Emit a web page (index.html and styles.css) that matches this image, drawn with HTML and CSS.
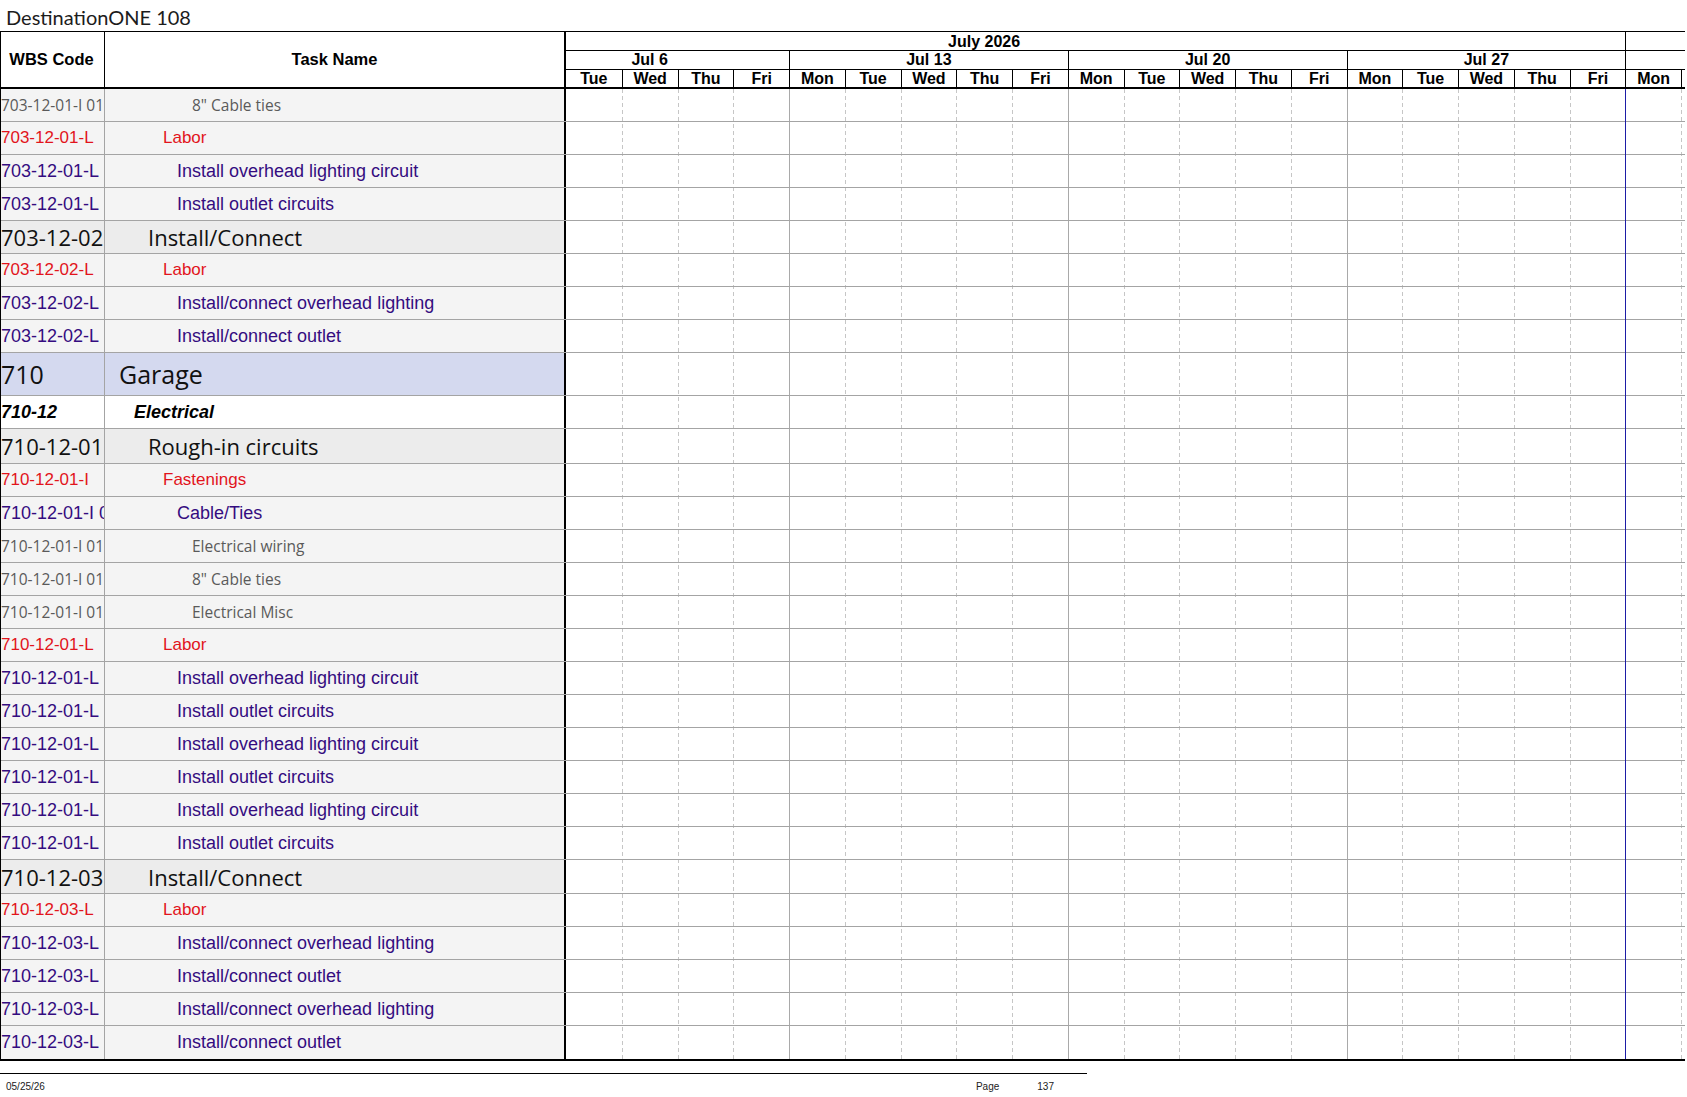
FILE: index.html
```html
<!DOCTYPE html>
<html lang="en">
<head>
<meta charset="utf-8">
<title>DestinationONE 108</title>
<link rel="stylesheet" href="styles.css">
</head>
<body>
<div class="title">DestinationONE 108</div>
<div class="sheet">
  <div class="head">
    <div class="h-wbs">WBS Code</div>
    <div class="h-task">Task Name</div>
    <div class="h-time">
      <div class="m jul">July 2026</div>
      <div class="m aug"></div>
      <div class="w w1">Jul 6</div>
      <div class="w w2">Jul 13</div>
      <div class="w w3">Jul 20</div>
      <div class="w w4">Jul 27</div>
      <div class="w aug"></div>
      <div class="d d0">Tue</div>
      <div class="d">Wed</div>
      <div class="d">Thu</div>
      <div class="d">Fri</div>
      <div class="d">Mon</div>
      <div class="d">Tue</div>
      <div class="d">Wed</div>
      <div class="d">Thu</div>
      <div class="d">Fri</div>
      <div class="d">Mon</div>
      <div class="d">Tue</div>
      <div class="d">Wed</div>
      <div class="d">Thu</div>
      <div class="d">Fri</div>
      <div class="d">Mon</div>
      <div class="d">Tue</div>
      <div class="d">Wed</div>
      <div class="d">Thu</div>
      <div class="d">Fri</div>
      <div class="d">Mon</div>
      <div class="d stub"></div>
    </div>
  </div>
  <div class="rows">
    <div class="status"></div>
    <div class="row lv4"><div class="wbs">703-12-01-I 01</div><div class="task">8" Cable ties</div><div class="gantt"></div></div>
    <div class="row lv2"><div class="wbs">703-12-01-L</div><div class="task">Labor</div><div class="gantt"></div></div>
    <div class="row lv3"><div class="wbs">703-12-01-L</div><div class="task">Install overhead lighting circuit</div><div class="gantt"></div></div>
    <div class="row lv3"><div class="wbs">703-12-01-L</div><div class="task">Install outlet circuits</div><div class="gantt"></div></div>
    <div class="row big"><div class="wbs">703-12-02</div><div class="task">Install/Connect</div><div class="gantt"></div></div>
    <div class="row lv2"><div class="wbs">703-12-02-L</div><div class="task">Labor</div><div class="gantt"></div></div>
    <div class="row lv3"><div class="wbs">703-12-02-L</div><div class="task">Install/connect overhead lighting</div><div class="gantt"></div></div>
    <div class="row lv3"><div class="wbs">703-12-02-L</div><div class="task">Install/connect outlet</div><div class="gantt"></div></div>
    <div class="row garage"><div class="wbs">710</div><div class="task">Garage</div><div class="gantt"></div></div>
    <div class="row elec"><div class="wbs">710-12</div><div class="task">Electrical</div><div class="gantt"></div></div>
    <div class="row big tall"><div class="wbs">710-12-01</div><div class="task">Rough-in circuits</div><div class="gantt"></div></div>
    <div class="row lv2"><div class="wbs">710-12-01-I</div><div class="task">Fastenings</div><div class="gantt"></div></div>
    <div class="row lv3"><div class="wbs">710-12-01-I 01</div><div class="task">Cable/Ties</div><div class="gantt"></div></div>
    <div class="row lv4"><div class="wbs">710-12-01-I 01</div><div class="task">Electrical wiring</div><div class="gantt"></div></div>
    <div class="row lv4"><div class="wbs">710-12-01-I 01</div><div class="task">8" Cable ties</div><div class="gantt"></div></div>
    <div class="row lv4"><div class="wbs">710-12-01-I 01</div><div class="task">Electrical Misc</div><div class="gantt"></div></div>
    <div class="row lv2"><div class="wbs">710-12-01-L</div><div class="task">Labor</div><div class="gantt"></div></div>
    <div class="row lv3"><div class="wbs">710-12-01-L</div><div class="task">Install overhead lighting circuit</div><div class="gantt"></div></div>
    <div class="row lv3"><div class="wbs">710-12-01-L</div><div class="task">Install outlet circuits</div><div class="gantt"></div></div>
    <div class="row lv3"><div class="wbs">710-12-01-L</div><div class="task">Install overhead lighting circuit</div><div class="gantt"></div></div>
    <div class="row lv3"><div class="wbs">710-12-01-L</div><div class="task">Install outlet circuits</div><div class="gantt"></div></div>
    <div class="row lv3"><div class="wbs">710-12-01-L</div><div class="task">Install overhead lighting circuit</div><div class="gantt"></div></div>
    <div class="row lv3"><div class="wbs">710-12-01-L</div><div class="task">Install outlet circuits</div><div class="gantt"></div></div>
    <div class="row big mid"><div class="wbs">710-12-03</div><div class="task">Install/Connect</div><div class="gantt"></div></div>
    <div class="row lv2"><div class="wbs">710-12-03-L</div><div class="task">Labor</div><div class="gantt"></div></div>
    <div class="row lv3"><div class="wbs">710-12-03-L</div><div class="task">Install/connect overhead lighting</div><div class="gantt"></div></div>
    <div class="row lv3"><div class="wbs">710-12-03-L</div><div class="task">Install/connect outlet</div><div class="gantt"></div></div>
    <div class="row lv3"><div class="wbs">710-12-03-L</div><div class="task">Install/connect overhead lighting</div><div class="gantt"></div></div>
    <div class="row lv3"><div class="wbs">710-12-03-L</div><div class="task">Install/connect outlet</div><div class="gantt"></div></div>
  </div>
</div>
<div class="footer">
  <span class="date">05/25/26</span>
  <span class="pageinfo"><span>Page</span><span>137</span></span>
</div>
</body>
</html>
```
FILE: styles.css
```css
* { box-sizing: border-box; }
html, body { margin: 0; padding: 0; background: #fff; }
body {
  width: 1687px;
  height: 1097px;
  overflow: hidden;
  font-family: "Liberation Sans", Arial, sans-serif;
  color: #000;
}

.title {
  height: 31px;
  padding: 4px 0 0 6px;
  font-family: Lato, "Open Sans", sans-serif;
  font-weight: 400;
  font-size: 20px;
  line-height: 26px;
  color: #1c1c1c;
}

.sheet {
  width: 1685px;
  border-left: 1px solid #000;
}

/* ---------- header ---------- */
.head {
  display: flex;
  height: 58px;
  border-top: 1px solid #000;
  border-bottom: 2px solid #000;
  font-weight: bold;
}
.h-wbs, .h-task {
  display: flex;
  align-items: center;
  justify-content: center;
  font-size: 16.5px;
}
.h-wbs { width: 104px; border-right: 1px solid #000; padding-right: 2px; }
.h-task { width: 461px; border-right: 2px solid #000; }
.h-time {
  flex: 1;
  display: grid;
  grid-template-columns: repeat(20, 55.75px) 1fr;
  grid-template-rows: 19px 19px 17px;
  font-size: 16px;
}
.m, .w, .d {
  display: flex;
  align-items: center;
  justify-content: center;
  line-height: 1;
  white-space: nowrap;
}
.m, .w { border-bottom: 1px solid #000; }
.m { grid-row: 1; }
.w { grid-row: 2; }
.d { grid-row: 3; border-left: 1px solid #000; padding-top: 1px; }
.d.d0 { border-left: 0; }
.m.jul { grid-column: 1 / 20; padding-right: 223px; padding-top: 1px; }
.w.w1 { grid-column: 1 / 5; padding-right: 55.75px; }
.w.w2 { grid-column: 5 / 10; border-left: 1px solid #000; }
.w.w3 { grid-column: 10 / 15; border-left: 1px solid #000; }
.w.w4 { grid-column: 15 / 20; border-left: 1px solid #000; }
.m.aug, .w.aug { grid-column: 20 / 22; border-left: 1px solid #000; }

/* ---------- body ---------- */
.rows {
  position: relative;
  border-bottom: 2px solid #000;
  background-color: #fff;
  background-image:
    linear-gradient(to right,
      transparent 788px, #a9a9a9 788px 789px, transparent 789px 1067px,
      #a9a9a9 1067px 1068px, transparent 1068px 1346px,
      #a9a9a9 1346px 1347px, transparent 1347px),
    repeating-linear-gradient(to bottom, transparent 0 4px, #fff 4px 7px),
    linear-gradient(to right,
      transparent 621px, #c6c6c6 621px 622px, transparent 622px 677px,
      #c6c6c6 677px 678px, transparent 678px 732px,
      #c6c6c6 732px 733px, transparent 733px 844px,
      #c6c6c6 844px 845px, transparent 845px 900px,
      #c6c6c6 900px 901px, transparent 901px 955px,
      #c6c6c6 955px 956px, transparent 956px 1011px,
      #c6c6c6 1011px 1012px, transparent 1012px 1123px,
      #c6c6c6 1123px 1124px, transparent 1124px 1178px,
      #c6c6c6 1178px 1179px, transparent 1179px 1234px,
      #c6c6c6 1234px 1235px, transparent 1235px 1290px,
      #c6c6c6 1290px 1291px, transparent 1291px 1401px,
      #c6c6c6 1401px 1402px, transparent 1402px 1457px,
      #c6c6c6 1457px 1458px, transparent 1458px 1513px,
      #c6c6c6 1513px 1514px, transparent 1514px 1569px,
      #c6c6c6 1569px 1570px, transparent 1570px 1680px,
      #c6c6c6 1680px 1681px, transparent 1681px);
}
.status {
  position: absolute;
  top: 0;
  bottom: 0;
  left: 1624px;
  width: 1px;
  background: #1d1da6;
  z-index: 2;
}
.row {
  display: flex;
  height: 33px;
  border-bottom: 1px solid #a4a4a4;
}
.row:last-child { border-bottom: 0; }
.row.garage { height: 43px; }
.row.tall { height: 35px; }
.row.mid { height: 34px; }

.wbs, .task {
  display: flex;
  align-items: center;
  white-space: nowrap;
  overflow: hidden;
  background: #f4f4f4;
}
.wbs { width: 104px; border-right: 1px solid #a4a4a4; }
.task { width: 461px; border-right: 2px solid #000; }
.gantt { flex: 1; }

/* level: material detail (gray) */
.lv4 .wbs, .lv4 .task {
  font-family: "Open Sans", sans-serif;
  font-size: 15.5px;
  color: #5a5a5a;
}
.lv4 .task { padding-left: 87px; }

/* level: resource type (red) */
.lv2 .wbs, .lv2 .task {
  font-size: 17px;
  color: #e2141c;
}
.lv2 .task { padding-left: 58px; }

/* level: task (purple) */
.lv3 .wbs, .lv3 .task {
  font-size: 18px;
  color: #340c80;
}
.lv3 .task { padding-left: 72px; }

/* level: work package (large) */
.big .wbs, .big .task {
  font-family: "Open Sans", sans-serif;
  font-size: 22px;
  color: #111;
  background: #ececec;
}
.big .task { padding-left: 43px; }

/* level: area */
.garage .wbs, .garage .task {
  font-family: "Open Sans", sans-serif;
  font-size: 25px;
  color: #111;
  background: #d4d9ef;
}
.garage .task { padding-left: 14px; }

/* level: trade */
.elec .wbs, .elec .task {
  font-size: 18px;
  font-weight: bold;
  font-style: italic;
  color: #000;
  background: #fff;
}
.elec .task { padding-left: 29px; }

/* ---------- footer ---------- */
.footer {
  width: 1087px;
  margin-top: 12px;
  border-top: 1px solid #000;
  height: 26px;
  display: flex;
  align-items: center;
  padding-left: 6px;
  font-size: 10px;
  color: #222;
}
.pageinfo {
  margin-left: auto;
  margin-right: 33px;
  display: flex;
  gap: 38px;
}
```
